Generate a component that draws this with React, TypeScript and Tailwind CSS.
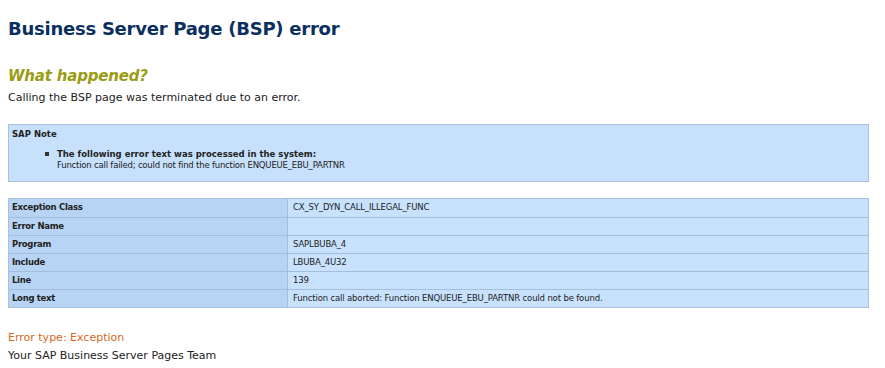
import React from "react";

const rows: [string, string][] = [
  ["Exception Class", "CX_SY_DYN_CALL_ILLEGAL_FUNC"],
  ["Error Name", ""],
  ["Program", "SAPLBUBA_4"],
  ["Include", "LBUBA_4U32"],
  ["Line", "139"],
  ["Long text", "Function call aborted: Function ENQUEUE_EBU_PARTNR could not be found."],
];

export default function App() {
  return (
    <div
      className="w-[885px] h-[368px] bg-white overflow-hidden px-2 pt-[17px] text-[#222]"
      style={{ fontFamily: "Tahoma, 'DejaVu Sans', Verdana, sans-serif" }}
    >
      <h1 className="text-[18px] leading-[24px] font-bold text-[#0b2f5e] tracking-[-0.25px]">
        Business Server Page (BSP) error
      </h1>
      <h2 className="mt-[25px] text-[15px] leading-[20px] font-bold italic text-[#9a9c14] tracking-[-0.2px]">
        What happened?
      </h2>
      <p className="mt-[4px] text-[11px] leading-[16px] text-[#222]">
        Calling the BSP page was terminated due to an error.
      </p>

      <div className="mt-[18px] w-[861px] h-[58px] bg-[#c7e1fd] border border-[#a8c1de] text-[#222]">
        <div className="pl-[3px] pt-[3px] text-[8.5px] leading-[12px] font-bold">SAP Note</div>
        <div className="mt-[9px] flex items-start pl-[36px]">
          <span className="mt-[3px] w-[4px] h-[4px] bg-[#333] mr-[8px]" />
          <div>
            <div className="text-[8.5px] leading-[11px] font-bold">
              The following error text was processed in the system:
            </div>
            <div className="text-[8.5px] leading-[11px] tracking-[-0.2px]">
              Function call failed; could not find the function ENQUEUE_EBU_PARTNR
            </div>
          </div>
        </div>
      </div>

      <div className="mt-[16px] w-[861px] border border-[#a8c1de] text-[#222]">
        {rows.map(([k, v], i) => (
          <div
            key={k}
            className={`flex h-[18px] ${i > 0 ? "border-t border-[#a3bedd]" : ""}`}
          >
            <div className="w-[279px] bg-[#b8d4f4] border-r border-[#a3bedd] pl-[3px] text-[8.5px] leading-[17px] font-bold tracking-[-0.3px]">
              {k}
            </div>
            <div className="flex-1 bg-[#c8e2fd] pl-[5px] text-[8.5px] leading-[17px] tracking-[-0.15px]">
              {v}
            </div>
          </div>
        ))}
      </div>

      <div className="mt-[21px] text-[11px] leading-[18px] text-[#d2691e]">
        Error type: Exception
      </div>
      <div className="text-[11px] leading-[18px] text-[#222]">
        Your SAP Business Server Pages Team
      </div>
    </div>
  );
}
